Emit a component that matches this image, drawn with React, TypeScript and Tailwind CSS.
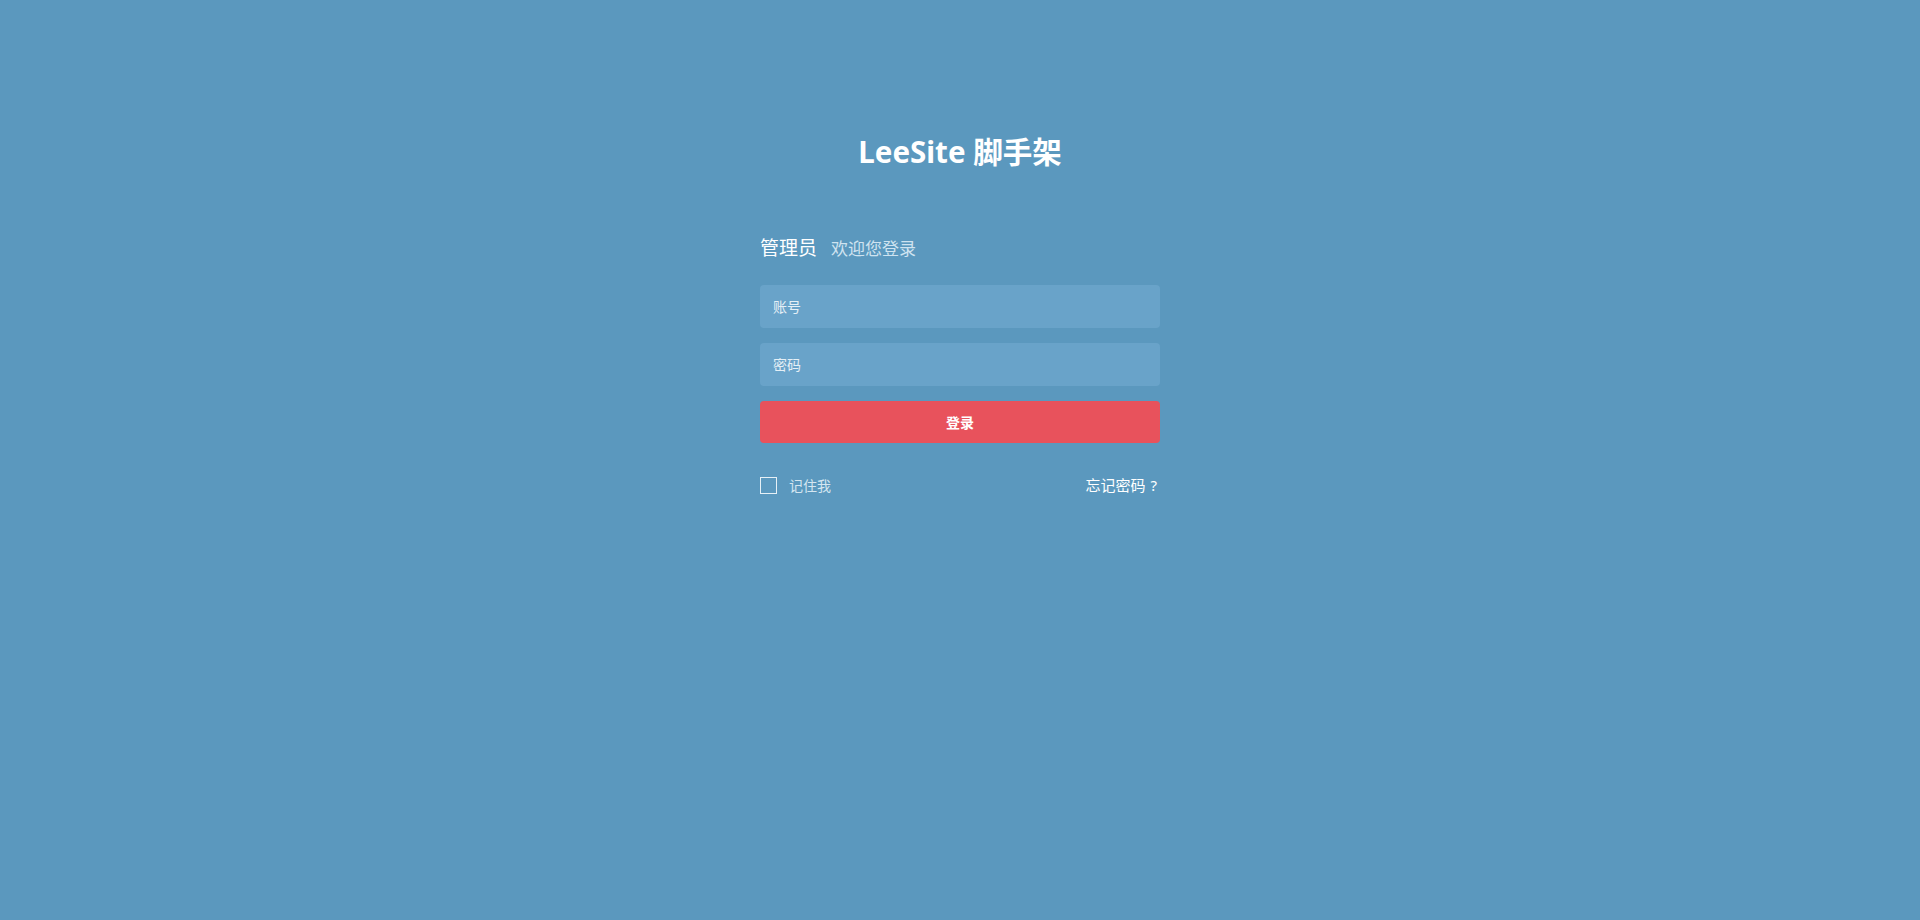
import React from 'react';

export default function App() {
  return (
    <div
      className="min-h-[920px] w-full bg-[#5b98be] flex flex-col items-center"
      style={{ fontFamily: '"Microsoft YaHei", "Noto Sans", "Noto Sans CJK SC", sans-serif' }}
    >
      {/* Title */}
      <h1 className="mt-[132px] text-[29.5px] leading-[40px] font-bold text-white">
        LeeSite 脚手架
      </h1>

      <div className="w-[400px] mt-[62px]">
        <div className="flex items-baseline h-[30px]">
          <span className="text-[19px] text-white">管理员</span>
          <span className="ml-[14px] text-[17px] text-[#cfe3f0]">欢迎您登录</span>
        </div>

        <div className="mt-[21px] flex flex-col gap-[15px]">
          <input
            placeholder="账号"
            className="h-[43px] w-full rounded-[4px] bg-[#69a3c9] px-[13px] text-[14px] text-white placeholder:text-[#e4eff6] outline-none"
          />
          <input
            type="password"
            placeholder="密码"
            className="h-[43px] w-full rounded-[4px] bg-[#69a3c9] px-[13px] text-[14px] text-white placeholder:text-[#e4eff6] outline-none"
          />
        </div>

        <button className="mt-[15px] h-[42px] w-full rounded-[4px] bg-[#e8525c] text-[14px] font-bold text-white">
          登录
        </button>

        <div className="mt-[31px] flex items-center justify-between">
          <label className="flex items-center gap-[12px]">
            <span className="w-[17px] h-[17px] border border-[#e6f0f6]" />
            <span className="text-[14px] text-[#d4e6f1]">记住我</span>
          </label>
          <a className="text-[15px] text-white pr-[3px]">
            忘记密码<span className="ml-[5px]">?</span>
          </a>
        </div>
      </div>
    </div>
  );
}
